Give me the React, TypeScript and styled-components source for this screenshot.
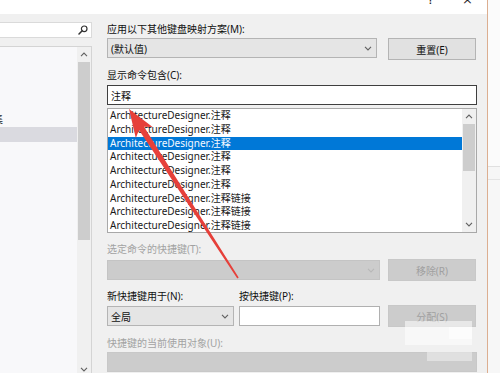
import React from "react";
import styled, { createGlobalStyle } from "styled-components";

const GlobalStyle = createGlobalStyle`
  html, body { margin: 0; padding: 0; background: #f0f0f0; }
  body { font-family: "Noto Sans", "Noto Sans CJK SC", sans-serif; font-size: 10px; color: #000; }
  * { box-sizing: border-box; }
`;

const Frame = styled.div`
  position: relative;
  width: 500px;
  height: 373px;
  overflow: hidden;
  display: flex;
  background: #f0f0f0;
`;

const Window = styled.div`
  width: 487px;
  display: flex;
  flex-direction: column;
`;

const TitleBar = styled.div`
  height: 14px;
  background: #fff;
  display: flex;
  justify-content: flex-end;
  align-items: flex-start;
  padding-right: 14px;
  gap: 28px;
  overflow: hidden;
`;

const TitleGlyph = styled.span`
  font-family: "DejaVu Sans", sans-serif;
  font-size: 13px;
  line-height: 13px;
  margin-top: -7px;
  color: #222;
`;

const Body = styled.div`
  flex: 1;
  display: flex;
  min-height: 0;
`;

const LeftPane = styled.div`
  width: 92px;
  display: flex;
  flex-direction: column;
  padding-top: 8px;
`;

const SearchBox = styled.div`
  height: 16px;
  background: #fff;
  border: 1px solid #dadada;
  border-left: none;
  display: flex;
  align-items: center;
  justify-content: flex-end;
  padding-right: 3px;
`;

const LeftList = styled.div`
  margin-top: 8px;
  flex: 1;
  display: flex;
  background: #f8f8fa;
  border-top: 1px solid #d4d4d4;
  border-right: 1px solid #d4d4d4;
  overflow: hidden;
`;

const LeftItems = styled.div`
  flex: 1;
  display: flex;
  flex-direction: column;
  padding-top: 65px;
  overflow: hidden;
`;

const LeftItem = styled.div<{ $selected?: boolean }>`
  height: 15px;
  line-height: 15px;
  white-space: nowrap;
  margin-left: ${(p) => (p.$selected ? "0" : "-7px")};
  background: ${(p) => (p.$selected ? "#dadae0" : "transparent")};
  color: #222;
`;

const ScrollBar = styled.div<{ $width: number }>`
  width: ${(p) => p.$width}px;
  display: flex;
  flex-direction: column;
  background: #f0f0f0;
`;

const ScrollArrow = styled.div<{ $down?: boolean }>`
  height: 15px;
  flex: none;
  display: flex;
  align-items: center;
  justify-content: center;
  margin-top: ${(p) => (p.$down ? "auto" : "0")};
`;

const Thumb = styled.div<{ $height: number }>`
  height: ${(p) => p.$height}px;
  margin: 0 1px;
  background: #cdcdcd;
  flex: none;
`;

const RightPane = styled.div`
  margin-left: 15px;
  width: 370px;
  display: flex;
  flex-direction: column;
  padding-top: 8px;
`;

const Label = styled.div<{ $disabled?: boolean; $mt?: number }>`
  height: 14px;
  line-height: 14px;
  margin-top: ${(p) => p.$mt ?? 0}px;
  color: ${(p) => (p.$disabled ? "#a2a2a2" : "#111")};
  white-space: nowrap;
`;

const LabelRow = styled.div`
  display: flex;
  margin-top: 8px;
`;

const LabelCell = styled.div<{ $width?: number }>`
  width: ${(p) => (p.$width ? `${p.$width}px` : "auto")};
  height: 14px;
  line-height: 14px;
  color: #111;
  white-space: nowrap;
`;

const Row = styled.div<{ $mt: number }>`
  display: flex;
  align-items: flex-start;
  margin-top: ${(p) => p.$mt}px;
`;

const Combo = styled.div<{ $width: number; $disabled?: boolean; $mt?: number; $mr: number }>`
  width: ${(p) => p.$width}px;
  height: 20px;
  margin-top: ${(p) => p.$mt ?? 0}px;
  margin-right: ${(p) => p.$mr}px;
  background: ${(p) => (p.$disabled ? "#cccccc" : "#e5e5e5")};
  border: 1px solid ${(p) => (p.$disabled ? "#c4c4c4" : "#b4b4b4")};
  display: flex;
  align-items: center;
  justify-content: space-between;
  padding: 0 4px 0 3px;
  color: #111;
`;

const Button = styled.div<{ $disabled?: boolean }>`
  width: 88px;
  height: 22px;
  background: ${(p) => (p.$disabled ? "#cccccc" : "#e1e1e1")};
  border: 1px solid ${(p) => (p.$disabled ? "#c8c8c8" : "#b4b4b4")};
  display: flex;
  align-items: center;
  justify-content: center;
  color: ${(p) => (p.$disabled ? "#a0a0a0" : "#111")};
`;

const TextBox = styled.div<{ $width: number; $dark?: boolean; $mt?: number; $mr?: number }>`
  width: ${(p) => p.$width}px;
  height: 20px;
  margin-top: ${(p) => p.$mt ?? 0}px;
  margin-right: ${(p) => p.$mr ?? 0}px;
  background: #fff;
  border: 1px solid ${(p) => (p.$dark ? "#3f3f3f" : "#b0b0b0")};
  display: flex;
  align-items: center;
  padding-left: 3px;
  color: #111;
  flex: none;
`;

const CommandList = styled.div`
  margin-top: 3px;
  height: 125px;
  border: 1px solid #a8a8a8;
  background: #fff;
  display: flex;
  overflow: hidden;
`;

const Rows = styled.div`
  flex: 1;
  display: flex;
  flex-direction: column;
`;

const ListRow = styled.div<{ $selected?: boolean }>`
  height: 13.75px;
  line-height: 13.75px;
  padding-left: 2px;
  white-space: nowrap;
  background: ${(p) => (p.$selected ? "#0078d7" : "transparent")};
  color: ${(p) => (p.$selected ? "#f4f8ff" : "#1a1a1a")};
`;

const DisabledBox = styled.div`
  margin-top: 2px;
  height: 20px;
  width: 370px;
  background: #cccccc;
  border: 1px solid #c8c8c8;
`;

const Edge = styled.div`
  flex: 1;
  border-left: 1.5px solid #dcae90;
  display: flex;
  flex-direction: column;
`;

const EdgeTop = styled.div`
  height: 167px;
  background: #fbfbfb;
  border-bottom: 1px solid #e0e0e0;
`;

const EdgeMid = styled.div`
  height: 13px;
  background: #f6f6f6;
  border-bottom: 1px solid #e4e4e4;
`;

const EdgeRest = styled.div`
  flex: 1;
  background: #f7f7f7;
`;

const Overlay = styled.svg`
  position: absolute;
  left: 0;
  top: 0;
  width: 500px;
  height: 373px;
  pointer-events: none;
`;

const Smudge = styled.div<{ $x: number; $y: number; $w: number; $h: number; $a: number }>`
  position: absolute;
  left: ${(p) => p.$x}px;
  top: ${(p) => p.$y}px;
  width: ${(p) => p.$w}px;
  height: ${(p) => p.$h}px;
  background: rgba(255, 255, 255, ${(p) => p.$a});
  pointer-events: none;
`;

const Chevron = ({ up, color = "#606060" }: { up?: boolean; color?: string }) => (
  <svg width="8" height="5" viewBox="0 0 8 5">
    <polyline
      points={up ? "1,4.2 4,1 7,4.2" : "1,0.8 4,4 7,0.8"}
      fill="none"
      stroke={color}
      strokeWidth="1.1"
    />
  </svg>
);

const Magnifier = () => (
  <svg width="10" height="10" viewBox="0 0 10 10">
    <circle cx="6.2" cy="3.8" r="2.8" fill="none" stroke="#333" strokeWidth="1.2" />
    <line x1="4.2" y1="5.8" x2="1" y2="9" stroke="#333" strokeWidth="1.5" strokeLinecap="round" />
  </svg>
);

const commands = [
  "ArchitectureDesigner.注释",
  "ArchitectureDesigner.注释",
  "ArchitectureDesigner.注释",
  "ArchitectureDesigner.注释",
  "ArchitectureDesigner.注释",
  "ArchitectureDesigner.注释",
  "ArchitectureDesigner.注释链接",
  "ArchitectureDesigner.注释链接",
  "ArchitectureDesigner.注释链接",
];

const arrowPoints = [
  [129, 109],
  [152.6, 127.0],
  [144.0, 126.7],
  [238.7, 277.6],
  [237.3, 278.4],
  [139.0, 129.9],
  [135.8, 137.9],
]
  .map((p) => p.join(","))
  .join(" ");

export default function App() {
  return (
    <>
      <GlobalStyle />
      <Frame>
        <Window>
          <TitleBar>
            <TitleGlyph>?</TitleGlyph>
            <TitleGlyph>×</TitleGlyph>
          </TitleBar>
          <Body>
            <LeftPane>
              <SearchBox>
                <Magnifier />
              </SearchBox>
              <LeftList>
                <LeftItems>
                  <LeftItem>集</LeftItem>
                  <LeftItem $selected>&nbsp;</LeftItem>
                </LeftItems>
                <ScrollBar $width={14}>
                  <ScrollArrow>
                    <Chevron up />
                  </ScrollArrow>
                  <Thumb $height={178} />
                  <ScrollArrow $down style={{ marginBottom: -4 }}>
                    <Chevron />
                  </ScrollArrow>
                </ScrollBar>
              </LeftList>
            </LeftPane>

            <RightPane>
              <Label>应用以下其他键盘映射方案(M):</Label>
              <Row $mt={2}>
                <Combo $width={270} $mr={11}>
                  <span>(默认值)</span>
                  <Chevron />
                </Combo>
                <Button>重置(E)</Button>
              </Row>

              <Label $mt={8}>显示命令包含(C):</Label>
              <TextBox $width={370} $dark $mt={3}>
                注释
              </TextBox>

              <CommandList>
                <Rows>
                  {commands.map((c, i) => (
                    <ListRow key={i} $selected={i === 2}>
                      {c}
                    </ListRow>
                  ))}
                </Rows>
                <ScrollBar $width={14}>
                  <ScrollArrow>
                    <Chevron up />
                  </ScrollArrow>
                  <Thumb $height={47} />
                  <ScrollArrow $down>
                    <Chevron />
                  </ScrollArrow>
                </ScrollBar>
              </CommandList>

              <Label $disabled $mt={9}>
                选定命令的快捷键(T):
              </Label>
              <Row $mt={3}>
                <Combo $width={273} $mr={8} $disabled $mt={1}>
                  <span />
                  <Chevron color="#b8b8b8" />
                </Combo>
                <Button $disabled>移除(R)</Button>
              </Row>

              <LabelRow>
                <LabelCell $width={132}>新快捷键用于(N):</LabelCell>
                <LabelCell>按快捷键(P):</LabelCell>
              </LabelRow>
              <Row $mt={2}>
                <Combo $width={127} $mr={5} $mt={1}>
                  <span>全局</span>
                  <Chevron />
                </Combo>
                <TextBox $width={141} $mt={1} $mr={8} />
                <Button $disabled>分配(S)</Button>
              </Row>

              <Label $disabled $mt={9}>
                快捷键的当前使用对象(U):
              </Label>
              <DisabledBox />
            </RightPane>
          </Body>
        </Window>
        <Edge>
          <EdgeTop />
          <EdgeMid />
          <EdgeRest />
        </Edge>

        <Smudge $x={405} $y={321} $w={67} $h={24} $a={0.55} />
        <Smudge $x={449} $y={327} $w={23} $h={12} $a={0.6} />
        <Smudge $x={427} $y={352} $w={45} $h={9} $a={0.4} />

        <Overlay viewBox="0 0 500 373">
          <polygon points={arrowPoints} fill="#e6403a" />
        </Overlay>
      </Frame>
    </>
  );
}
